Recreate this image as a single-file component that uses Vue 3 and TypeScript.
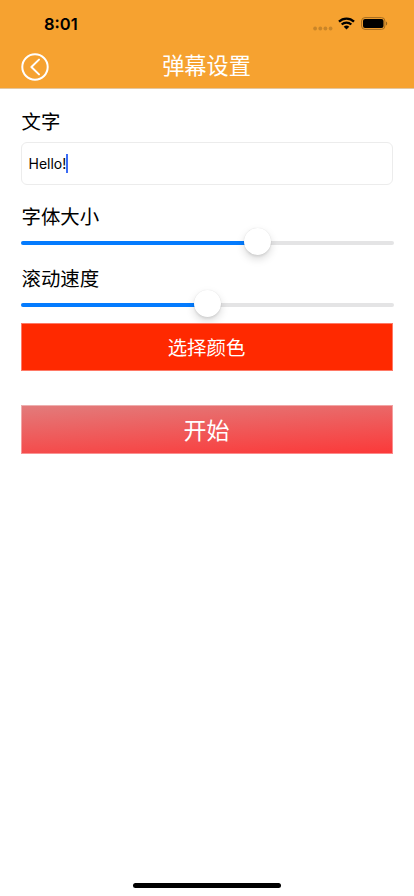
<script setup lang="ts">
import { ref } from 'vue'

interface Slider {
  label: string
  percent: number
}

const message = ref('Hello!')
const sliders = ref<Slider[]>([
  { label: '字体大小', percent: 63.6 },
  { label: '滚动速度', percent: 50.1 },
])
</script>

<template>
  <div class="screen">
    <header class="header">
      <div class="status">
        <span class="time">8:01</span>
        <div class="indicators">
          <svg class="dots" width="20" height="5" viewBox="0 0 20 5">
            <circle cx="2.1" cy="2.5" r="1.9" />
            <circle cx="7.3" cy="2.5" r="1.9" />
            <circle cx="12.4" cy="2.5" r="1.9" />
            <circle cx="17.6" cy="2.5" r="1.9" />
          </svg>
          <svg class="wifi" width="17" height="13" viewBox="0 0 17 13">
            <path d="M1 4.6a10.8 10.8 0 0 1 15 0" />
            <path d="M3.7 7.5a6.9 6.9 0 0 1 9.6 0" />
            <path class="core" d="M8.5 12.5L5.7 9.8a4 4 0 0 1 5.6 0z" />
          </svg>
          <svg class="battery" width="27" height="13" viewBox="0 0 27 13">
            <rect class="shell" x=".6" y=".6" width="23.3" height="11.8" rx="3.4" />
            <rect x="2" y="2" width="20.5" height="9" rx="2" />
            <path class="cap" d="M25 4.5c1.6.7 1.6 3.3 0 4z" />
          </svg>
        </div>
      </div>
      <div class="nav">
        <button class="back" aria-label="返回">
          <svg width="28" height="28" viewBox="0 0 28 28">
            <circle cx="14" cy="14" r="12.7" />
            <path d="M18 6.6L10.4 14l7.6 7.4" />
          </svg>
        </button>
        <h1 class="title">弹幕设置</h1>
      </div>
    </header>

    <main class="content">
      <div class="label">文字</div>
      <div class="field"><span>{{ message }}</span><i class="caret"></i></div>

      <section v-for="slider in sliders" :key="slider.label" class="setting">
        <div class="label">{{ slider.label }}</div>
        <div class="slider">
          <div class="track">
            <div class="fill" :style="{ width: slider.percent + '%' }"></div>
          </div>
          <div class="thumb" :style="{ left: slider.percent + '%' }"></div>
        </div>
      </section>

      <button class="color">选择颜色</button>
      <button class="start">开始</button>
    </main>

    <footer class="home"><div class="home-bar"></div></footer>
  </div>
</template>

<style>
body {
  background: #fff;
}
</style>

<style scoped>
.screen {
  display: flex;
  flex-direction: column;
  box-sizing: border-box;
  height: 896px;
  overflow: hidden;
  background: #fff;
  color: #000;
  font-family: Inter, "Noto Sans CJK SC", sans-serif;
}
button {
  padding: 0;
  border: 0;
  background: none;
  font: inherit;
}
svg {
  display: block;
}
.header {
  box-sizing: border-box;
  flex: none;
  height: 89px;
  background: #f6a230;
  border-bottom: 1px solid #e3c6a0;
}
.status {
  display: flex;
  justify-content: space-between;
  height: 44px;
  padding: 0 26px 0 44px;
}
.time {
  padding-top: 14px;
  font-size: 16.5px;
  line-height: 20px;
  font-weight: 600;
}
.indicators {
  display: flex;
  align-items: flex-start;
  padding-top: 17px;
}
.dots {
  margin: 8.5px 5px 0 0;
  fill: #c98528;
}
.wifi {
  margin-right: 6px;
  fill: none;
  stroke: #000;
  stroke-width: 2.3;
}
.wifi .core {
  fill: #000;
  stroke: none;
}
.battery .shell {
  fill: none;
  stroke: #a26b20;
  stroke-width: 1;
}
.battery .cap {
  fill: #94621d;
}
.nav {
  display: grid;
  grid-template-columns: 28px 1fr 28px;
  height: 44px;
  padding: 0 21px;
}
.back {
  height: 28px;
  margin-top: 9px;
}
.back svg {
  fill: none;
  stroke: #fff;
  stroke-width: 2;
  stroke-linecap: round;
  stroke-linejoin: round;
}
.title {
  margin: 6px 0 0;
  padding-right: 1px;
  color: #fff;
  font-size: 22.2px;
  line-height: 32px;
  font-weight: 400;
  text-align: center;
}
.content {
  flex: 1;
  display: flex;
  flex-direction: column;
  padding: 19px 21px 0;
}
.label {
  height: 28px;
  padding-left: 0.5px;
  font-size: 19.4px;
  line-height: 28px;
  font-weight: 400;
}
.field {
  display: flex;
  align-items: center;
  box-sizing: border-box;
  height: 43px;
  margin-top: 6px;
  padding: 0 6.5px;
  border: 1px solid #ececec;
  border-radius: 6px;
  font-size: 14px;
  font-family: Inter, sans-serif;
}
.caret {
  flex: none;
  width: 2px;
  height: 19px;
  margin-left: -0.5px;
  background: #3b6bf5;
}
.setting {
  height: 62px;
}
.field + .setting {
  margin-top: 18px;
}
.slider {
  position: relative;
  margin: 10px -0.5px 0;
}
.track {
  height: 4px;
  border-radius: 2px;
  background: #e4e4e5;
  overflow: hidden;
}
.fill {
  height: 100%;
  background: #047bfe;
}
.thumb {
  position: absolute;
  top: -13px;
  width: 27px;
  height: 27px;
  margin-left: -13.5px;
  border-radius: 50%;
  background: #fff;
  box-shadow: 0 0 1px rgba(0, 0, 0, .12), 0 4px 9px rgba(0, 0, 0, .15), 0 2px 2px rgba(0, 0, 0, .06);
}
.color,
.start {
  flex: none;
  box-sizing: border-box;
  padding: 0 1px 2px 0;
  color: #fff;
  font-weight: 400;
}
.color {
  position: relative;
  height: 48px;
  margin-top: -4px;
  border: 1px solid #ff7966;
  background: #ff2900;
  font-size: 19.4px;
}
.start {
  height: 49px;
  margin-top: 34px;
  border: 1px solid rgba(255, 255, 255, .4);
  background: linear-gradient(177deg, #e27c7c, #fc3838);
  background-origin: border-box;
  font-size: 23px;
}
.home {
  display: flex;
  justify-content: center;
  height: 13px;
}
.home-bar {
  width: 148px;
  height: 5px;
  border-radius: 3px;
  background: #000;
}
</style>
